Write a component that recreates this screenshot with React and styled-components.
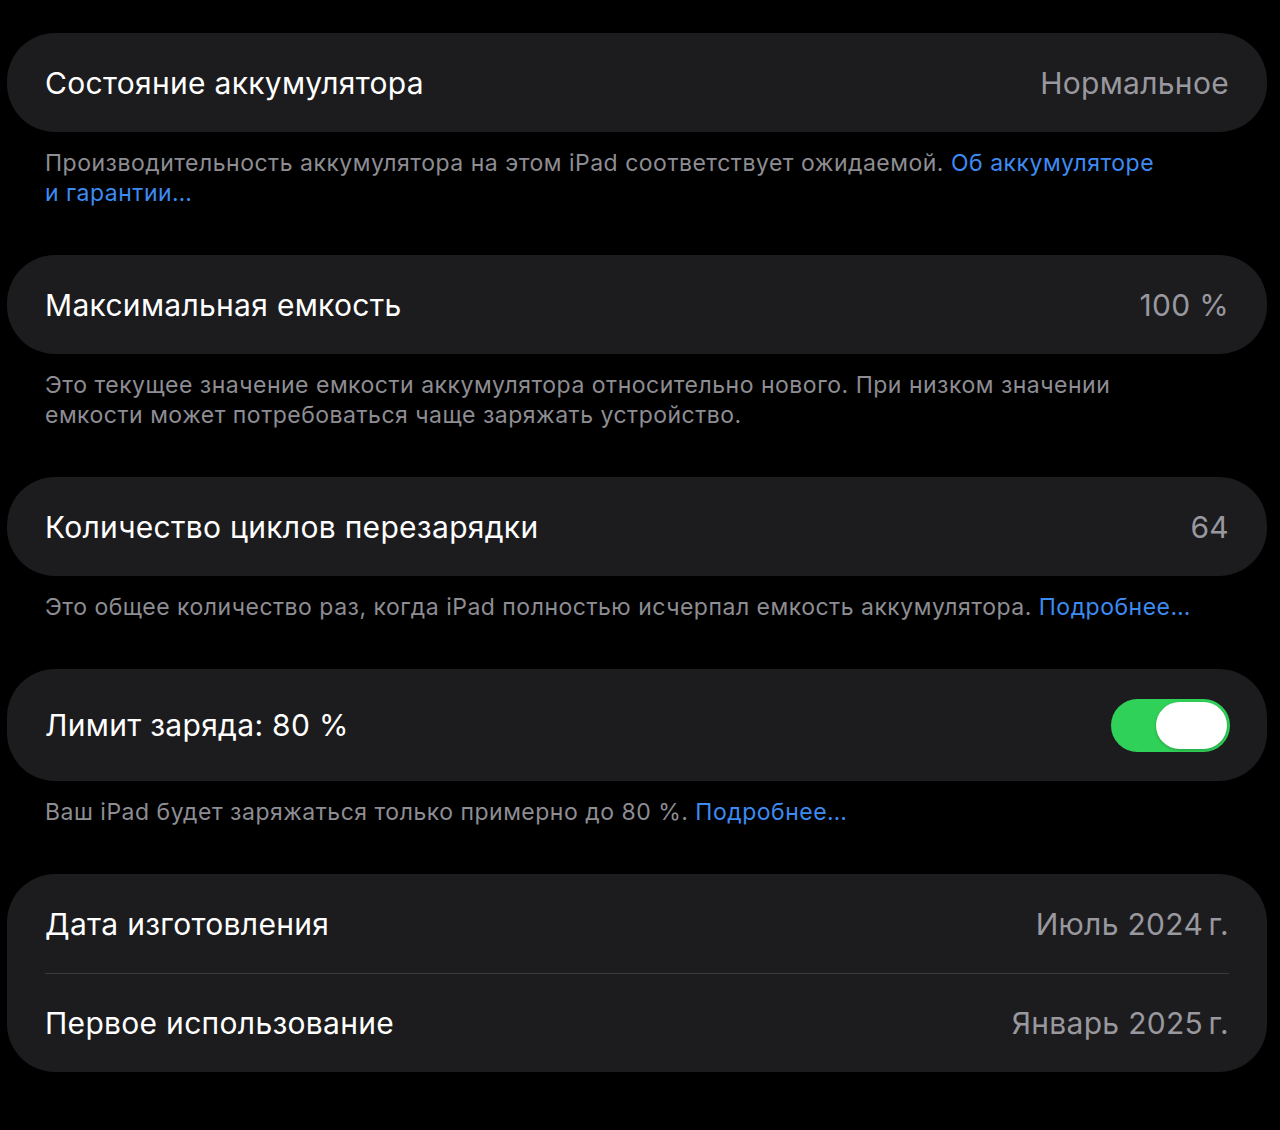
import React from 'react';
import styled, { createGlobalStyle } from 'styled-components';

const GlobalStyle = createGlobalStyle`
  html, body {
    margin: 0;
    background: #000;
  }
  body {
    font-family: Inter, Roboto, "Noto Sans", "Liberation Sans", sans-serif;
    -webkit-font-smoothing: antialiased;
  }
`;

const Page = styled.div`
  width: 1260px;
  padding: 33px 13px 58px 7px;
  background: #000;
`;

const Group = styled.section`
  & + & {
    margin-top: 47px;
  }
`;

const Card = styled.div`
  background: #1c1c1e;
  border-radius: 48px;
  overflow: hidden;
`;

const Row = styled.div`
  display: flex;
  align-items: center;
  justify-content: space-between;
  height: ${p => (p.$tall ? 112 : 99)}px;
  margin: 0 38px;
  box-sizing: border-box;
  & + & {
    border-top: 1.5px solid #3a3a3c;
  }
`;

const Label = styled.span`
  color: #fff;
  font-size: 30px;
  font-weight: 400;
  letter-spacing: 0.3px;
`;

const Value = styled.span`
  color: #98989e;
  font-size: 30px;
  font-weight: 400;
  letter-spacing: 0.3px;
`;

const Footer = styled.p`
  margin: 16px 0 0;
  padding: 0 60px 0 38px;
  color: #8d8d93;
  font-size: 23px;
  line-height: 30px;
  letter-spacing: 0.5px;
`;

const Link = styled.a`
  color: #3d8bf2;
  text-decoration: none;
`;

const NoWrap = styled.span`
  white-space: nowrap;
`;

const Switch = styled.span`
  display: flex;
  align-items: center;
  justify-content: flex-end;
  width: 119px;
  height: 53px;
  padding: 3px;
  box-sizing: border-box;
  border-radius: 27px;
  background: #30d158;
  margin-right: -1px;
`;

const Knob = styled.span`
  width: 71px;
  height: 47px;
  border-radius: 24px;
  background: #fff;
  box-shadow: 0 1px 3px rgba(0, 0, 0, 0.25);
`;

export default function App() {
  return (
    <>
      <GlobalStyle />
      <Page>
        <Group>
          <Card>
            <Row>
              <Label>Состояние аккумулятора</Label>
              <Value>Нормальное</Value>
            </Row>
          </Card>
          <Footer>
            Производительность аккумулятора на этом iPad соответствует ожидаемой.{' '}
            <Link>
              Об аккумуляторе <NoWrap>и гарантии…</NoWrap>
            </Link>
          </Footer>
        </Group>

        <Group>
          <Card>
            <Row>
              <Label>Максимальная емкость</Label>
              <Value>100 %</Value>
            </Row>
          </Card>
          <Footer>
            Это текущее значение емкости аккумулятора относительно нового. При низком значении
            емкости может потребоваться чаще заряжать устройство.
          </Footer>
        </Group>

        <Group>
          <Card>
            <Row>
              <Label>Количество циклов перезарядки</Label>
              <Value>64</Value>
            </Row>
          </Card>
          <Footer>
            Это общее количество раз, когда iPad полностью исчерпал емкость аккумулятора.{' '}
            <Link>Подробнее…</Link>
          </Footer>
        </Group>

        <Group>
          <Card>
            <Row $tall>
              <Label>Лимит заряда: 80 %</Label>
              <Switch>
                <Knob />
              </Switch>
            </Row>
          </Card>
          <Footer>
            Ваш iPad будет заряжаться только примерно до 80 %. <Link>Подробнее…</Link>
          </Footer>
        </Group>

        <Group>
          <Card>
            <Row>
              <Label>Дата изготовления</Label>
              <Value>Июль 2024{'\u202F'}г.</Value>
            </Row>
            <Row>
              <Label>Первое использование</Label>
              <Value>Январь 2025{'\u202F'}г.</Value>
            </Row>
          </Card>
        </Group>
      </Page>
    </>
  );
}
